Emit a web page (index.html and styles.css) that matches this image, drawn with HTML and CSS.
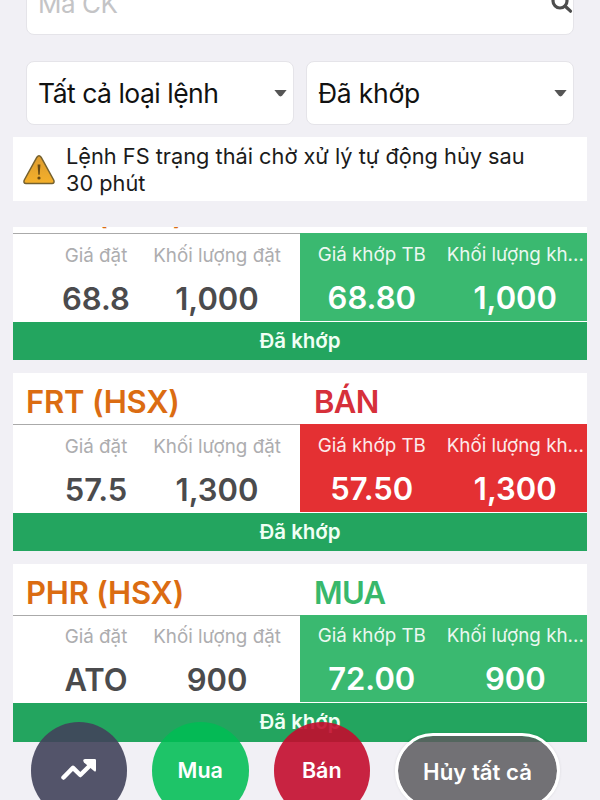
FILE: index.html
```html
<!DOCTYPE html>
<html lang="vi">
<head>
<meta charset="utf-8">
<title>Sổ lệnh</title>
<link rel="stylesheet" href="styles.css">
</head>
<body>
<main class="screen">
  <section class="filters">
    <div class="search">
      <span class="placeholder">Mã CK</span>
      <svg class="search-icon" width="22" height="22" viewBox="0 0 22 22"><circle cx="9" cy="9" r="7"/><path d="M14.500 14.500l5 4.700"/></svg>
    </div>
    <div class="selects">
      <div class="select"><span class="select-type">Tất cả loại lệnh</span><i class="caret"></i></div>
      <div class="select"><span class="select-state">Đã khớp</span><i class="caret"></i></div>
    </div>
  </section>

  <section class="notice">
    <svg class="warning" width="34" height="32" viewBox="0 0 34 32">
      <defs><linearGradient id="amber" x1="0" y1="0" x2="0" y2="1"><stop offset="0" stop-color="#dc9c30"/><stop offset="1" stop-color="#f5b02a"/></linearGradient></defs>
      <path d="M14.900 3.200Q17 .4 19.100 3.200L31.800 26.200Q32.800 29.300 30 29.500H4Q1.200 29.300 2.200 26.200Z" fill="url(#amber)" stroke="#75612f" stroke-width="1.500"/>
      <path d="M15.600 10.500h2.800l-.7 10.300h-1.400z" fill="#674914"/><circle cx="17" cy="24" r="1.600" fill="#674914"/>
    </svg>
    <p class="notice-text">Lệnh FS trạng thái chờ xử lý tự động hủy sau<br>30 phút</p>
  </section>

  <section class="orders">
    <article class="order buy">
      <header class="head"><span class="ticker">PHR (HSX)</span></header>
      <div class="body">
        <div class="placed">
          <div class="cell"><span class="label">Giá đặt</span><b class="value">68.8</b></div>
          <div class="cell"><span class="label">Khối lượng đặt</span><b class="value">1,000</b></div>
        </div>
        <div class="matched">
          <div class="cell"><span class="label">Giá khớp TB</span><b class="value">68.80</b></div>
          <div class="cell"><span class="label">Khối lượng kh...</span><b class="value">1,000</b></div>
        </div>
      </div>
      <footer class="status">Đã khớp</footer>
    </article>
    <article class="order sell">
      <header class="head"><span class="ticker">FRT (HSX)</span><span class="side">BÁN</span></header>
      <div class="body">
        <div class="placed">
          <div class="cell"><span class="label">Giá đặt</span><b class="value">57.5</b></div>
          <div class="cell"><span class="label">Khối lượng đặt</span><b class="value">1,300</b></div>
        </div>
        <div class="matched">
          <div class="cell"><span class="label">Giá khớp TB</span><b class="value">57.50</b></div>
          <div class="cell"><span class="label">Khối lượng kh...</span><b class="value">1,300</b></div>
        </div>
      </div>
      <footer class="status">Đã khớp</footer>
    </article>
    <article class="order buy">
      <header class="head"><span class="ticker">PHR (HSX)</span><span class="side">MUA</span></header>
      <div class="body">
        <div class="placed">
          <div class="cell"><span class="label">Giá đặt</span><b class="value">ATO</b></div>
          <div class="cell"><span class="label">Khối lượng đặt</span><b class="value">900</b></div>
        </div>
        <div class="matched">
          <div class="cell"><span class="label">Giá khớp TB</span><b class="value">72.00</b></div>
          <div class="cell"><span class="label">Khối lượng kh...</span><b class="value">900</b></div>
        </div>
      </div>
      <footer class="status">Đã khớp</footer>
    </article>
  </section>

  <nav class="actions">
    <div class="round chart"><svg width="38" height="24" viewBox="0 0 38 24"><path class="trend" d="M3.500 19.500L13 9.800l7.300 7.200L31 6.500"/><path class="arrow" d="M25 1h9.800q1.200 0 1.200 1.200V12q0 2.400-2 1L24 4.500q-2-2.800 1-3.500z"/></svg></div>
    <div class="round green">Mua</div>
    <div class="round red">Bán</div>
    <div class="cancel">Hủy tất cả</div>
  </nav>
</main>
</body>
</html>
```
FILE: styles.css
```css
* { box-sizing: border-box; }
body { margin: 0; background: #f1f0f5; font-family: Inter, "Noto Sans", sans-serif; }
.screen { position: relative; width: 600px; height: 800px; overflow: hidden; padding: 0 13px; display: flex; flex-direction: column; }
.filters { flex: none; height: 137px; padding: 0 13px 12px; display: flex; flex-direction: column; justify-content: flex-end; gap: 26px; }
.search, .select { flex: none; height: 64px; background: #fff; border: 1px solid #e5e4e9; border-radius: 8px; display: flex; align-items: center; justify-content: space-between; }
.search { padding: 2px 0 0 11px; }
.placeholder { font-size: 26px; line-height: 32px; color: #c4c4c6; letter-spacing: -.5px; }
.search-icon { fill: none; stroke: #4d4d4d; stroke-width: 3.2; stroke-linecap: round; margin-top: -3px; }
.selects { display: flex; gap: 12px; }
.select { flex: 1; padding: 0 6px 0 11px; font-size: 26.500px; color: #111; white-space: nowrap; }
.select-type { letter-spacing: -.5px; }
.select-state { letter-spacing: -.25px; }
.caret { width: 13px; height: 7px; background: #555; clip-path: polygon(0 0, 100% 0, 62% 90%, 50% 100%, 38% 90%); }
.notice { flex: none; height: 64px; background: #fff; padding: 6px 0 0 9px; display: flex; gap: 10px; }
.warning { margin-top: 11px; flex: none; }
.notice-text { margin: 0; font-size: 21.750px; line-height: 26.500px; color: #1b1b1b; white-space: nowrap; }
.orders { flex: none; margin-top: 26px; height: 573px; overflow: hidden; }
.order { height: 178px; margin-bottom: 12.700px; background: #fff; }
.order:first-child { margin-top: -44.700px; }
.head { height: 52px; border-bottom: 1px solid #aaa; display: flex; align-items: center; font-size: 31px; line-height: 40px; font-weight: 600; letter-spacing: -.2px; padding-top: 7px; }
.order:first-child .head { padding-top: 11px; }
.ticker { width: 287px; padding-left: 13px; color: #db6c12; }
.side { padding-left: 14px; letter-spacing: -.6px; }
.buy .side { color: #38b86b; }
.sell .side { color: #d6303a; }
.body { height: 87.500px; display: flex; }
.placed, .matched { display: flex; width: 287px; }
.placed { height: 87px; padding-left: 35px; color: #4b4b4d; }
.matched { height: 87.500px; margin-top: -1px; color: #fff; }
.buy .matched { background: #3ab970; }
.sell .matched { background: #e43033; }
.cell { display: flex; flex-direction: column; align-items: center; width: 143.500px; padding-top: 9.500px; white-space: nowrap; }
.placed .cell:first-child { width: 96px; }
.placed .cell:last-child { width: 146px; }
.label { font-size: 18.800px; line-height: 24px; font-weight: 400; }
.placed .label { color: #adadaf; }
.matched .label { opacity: .9; }
.value { font-size: 31px; line-height: 38px; font-weight: 600; margin-top: 12px; }
.status { height: 38.500px; background: #23a55f; color: #f0fff5; font-size: 20.500px; font-weight: 600; line-height: 38px; text-align: center; }
.actions { position: absolute; left: 30.500px; top: 722px; display: flex; align-items: flex-start; }
.round { width: 96.500px; height: 96.500px; border-radius: 50%; margin-right: 25px; color: #fff; display: flex; align-items: center; justify-content: center; font-size: 21.500px; font-weight: 600; }
.chart { background: rgba(65, 66, 91, .9); }
.green { background: rgba(0, 189, 84, .88); }
.red { background: rgba(195, 12, 45, .9); }
.trend { fill: none; stroke: #fff; stroke-width: 4.500; stroke-linecap: round; stroke-linejoin: round; }
.arrow { fill: #fff; }
.cancel { margin-top: 11px; width: 165px; height: 76px; border: 3px solid #fff; border-radius: 38px; background: rgba(92, 91, 94, .85); background-clip: padding-box; color: #fff; font-size: 22.200px; font-weight: 600; display: flex; align-items: center; justify-content: center; box-shadow: 0 0 3px rgba(0,0,0,.1); }
```
